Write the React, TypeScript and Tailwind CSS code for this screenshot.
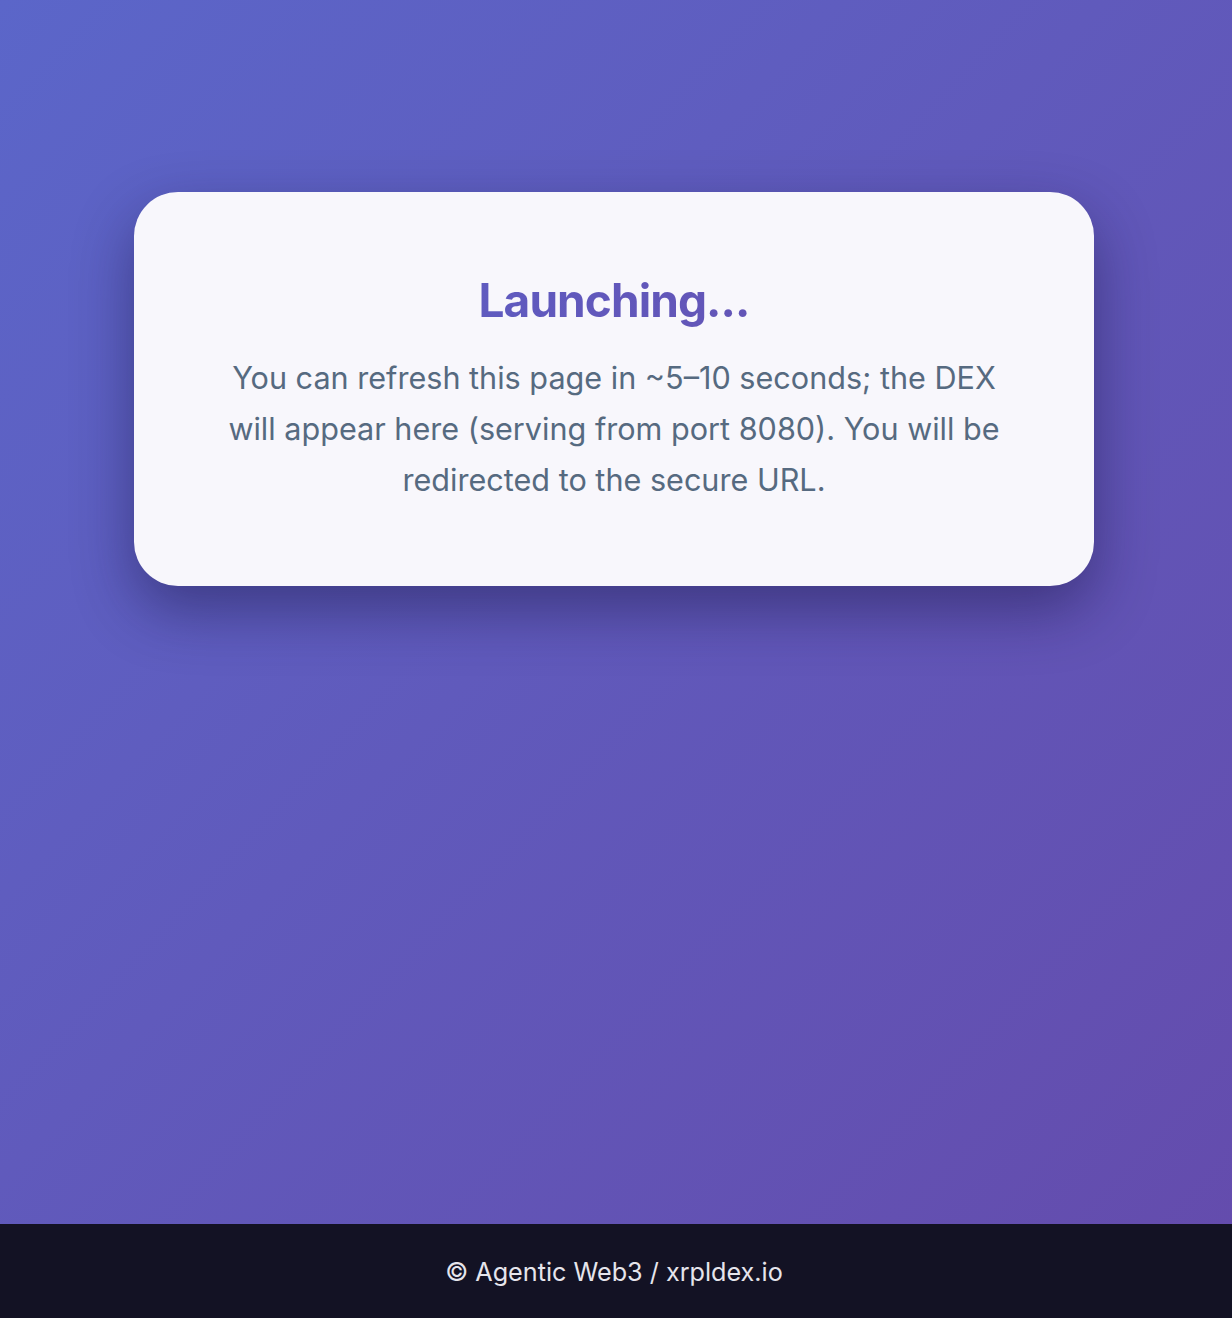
export default function App() {
  return (
    <div
      className="flex min-h-[1318px] flex-col bg-gradient-to-br from-[#5b66c9] to-[#644bac]"
      style={{ fontFamily: 'Inter, "Noto Sans", sans-serif' }}
    >
      <main className="flex flex-1 justify-center pl-[134px] pr-[138px] pt-[192px]">
        <div className="h-fit w-full rounded-[44px] bg-[#f8f7fc] px-16 pb-[81px] pt-[78px] text-center shadow-[0_24px_60px_rgba(20,16,60,0.45)]">
          <h1 className="bg-gradient-to-r from-[#5b60c8] to-[#664fae] bg-clip-text text-[46px] font-bold leading-[60px] tracking-[-0.02em] text-transparent">
            Launching...
          </h1>
          <p className="mx-auto mt-[22px] max-w-[800px] text-[30.6px] leading-[51px] text-[#566a80]">
            You can refresh this page in ~5–10 seconds; the DEX will appear here (serving from port 8080). You will be
            redirected to the secure URL.
          </p>
        </div>
      </main>
      <footer className="flex h-[94px] items-center justify-center bg-[#131224] pr-[4px] pt-[3px] text-[25.2px] text-[#e6e5ec]">
        © Agentic Web3 / xrpldex.io
      </footer>
    </div>
  );
}
